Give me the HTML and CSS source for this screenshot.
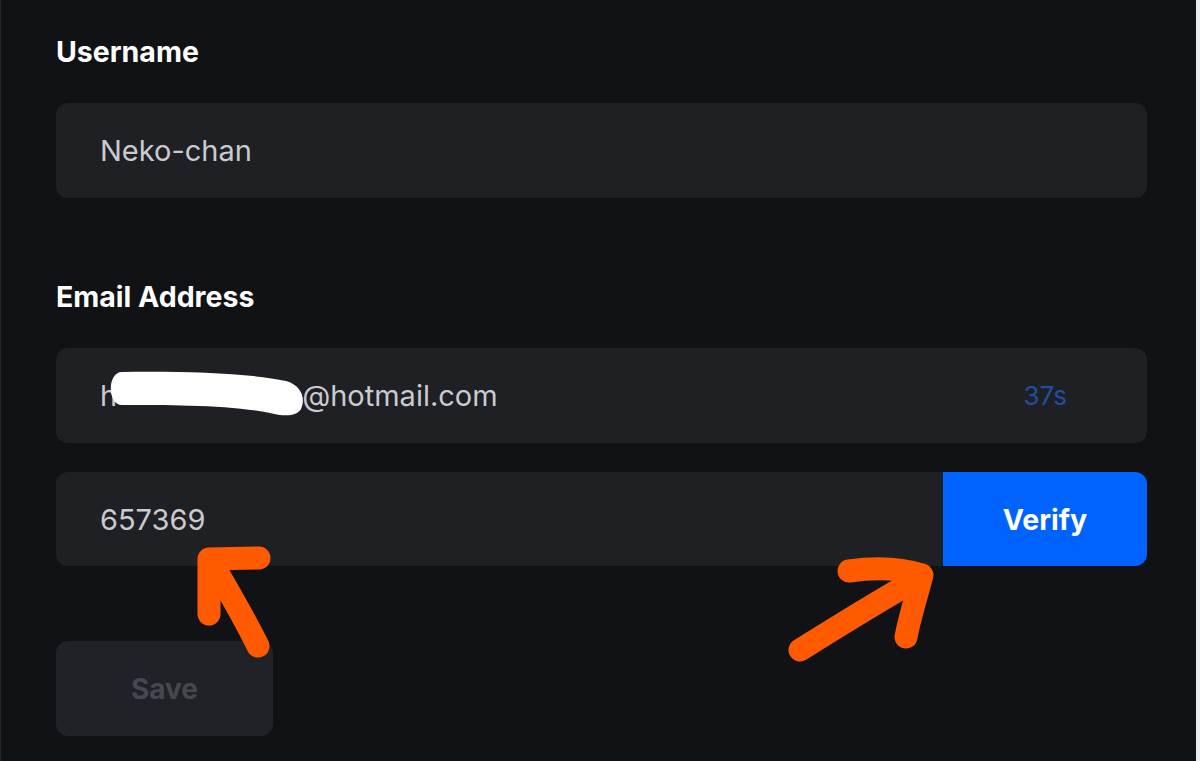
FILE: index.html
```html
<!DOCTYPE html>
<html>
<head>
<meta charset="utf-8">
<link rel="stylesheet" href="styles.css">
</head>
<body>
<div class="page">
  <form class="form">
    <div class="field">
      <label class="label">Username</label>
      <div class="input"><span class="value">Neko-chan</span></div>
    </div>
    <div class="field field-email">
      <label class="label">Email Address</label>
      <div class="input input-email"><span class="value">h</span><span class="value mail">@hotmail.com</span><span class="timer">37s</span></div>
      <div class="code-row">
        <div class="input code"><span class="value">657369</span></div>
        <button type="button" class="verify">Verify</button>
      </div>
    </div>
    <button type="button" class="save">Save</button>
  </form>
  <svg class="overlay" width="1200" height="761" viewBox="0 0 1200 761">
    <path d="M122 372 C180 371 250 373 286 381 C301 385 306 398 301 409 C297 416 285 417 270 413 C230 405 170 405 122 405 C107 405 107 372 122 372 Z" fill="#ffffff"/>
    <g fill="none" stroke="#ff5a00" stroke-width="23" stroke-linecap="round" stroke-linejoin="round">
      <path d="M209 614 L209 559 L259 558"/>
      <path d="M212 563 C228 590 244 618 258 646"/>
      <path d="M849 571 C876 567 900 568 922 575 C916 598 910 616 906 637"/>
      <path d="M800 650 C840 625 880 600 916 580"/>
    </g>
  </svg>
</div>
</body>
</html>
```
FILE: styles.css
```css
* { box-sizing: border-box; }
html, body { margin: 0; padding: 0; }
body {
  background: #111216;
  font-family: Inter, "Noto Sans", sans-serif;
  width: 1200px;
  height: 761px;
  overflow: hidden;
}
.page {
  position: relative;
  width: 1200px;
  height: 761px;
  border-left: 1px solid #23242a;
  border-right: 4px solid #ececee;
  padding: 37px 0 0 55px;
}
.form {
  width: 1091px;
  display: flex;
  flex-direction: column;
}
.field { display: flex; flex-direction: column; }
.label {
  color: #ffffff;
  font-weight: 700;
  font-size: 28.5px;
  line-height: 30px;
  height: 30px;
  margin-bottom: 36px;
}
.input {
  height: 95px;
  background: #1f2024;
  border-radius: 12px;
  display: flex;
  align-items: center;
  padding: 0 44px;
}
.value {
  color: #c9cbd1;
  font-size: 29px;
}
.input-email .mail { margin-left: 185px; }
.timer {
  margin-left: auto;
  margin-right: 36px;
  color: #1f4f9e;
  font-size: 26px;
}
.field-email { margin-top: 84px; }
.code-row {
  display: flex;
  margin-top: 29px;
  height: 94px;
}
.code {
  flex: 1;
  border-radius: 12px 0 0 12px;
  height: 94px;
}
.verify {
  width: 204px;
  border: none;
  background: #0062ff;
  color: #ffffff;
  font-family: Inter, "Noto Sans", sans-serif;
  font-weight: 700;
  font-size: 28.5px;
  border-radius: 0 12px 12px 0;
}
.save {
  margin-top: 75px;
  width: 217px;
  height: 95px;
  border: none;
  border-radius: 12px;
  background: #202228;
  color: #45484f;
  font-family: Inter, "Noto Sans", sans-serif;
  font-weight: 700;
  font-size: 28px;
}
.overlay {
  position: absolute;
  left: -1px;
  top: 0;
  pointer-events: none;
}
```
